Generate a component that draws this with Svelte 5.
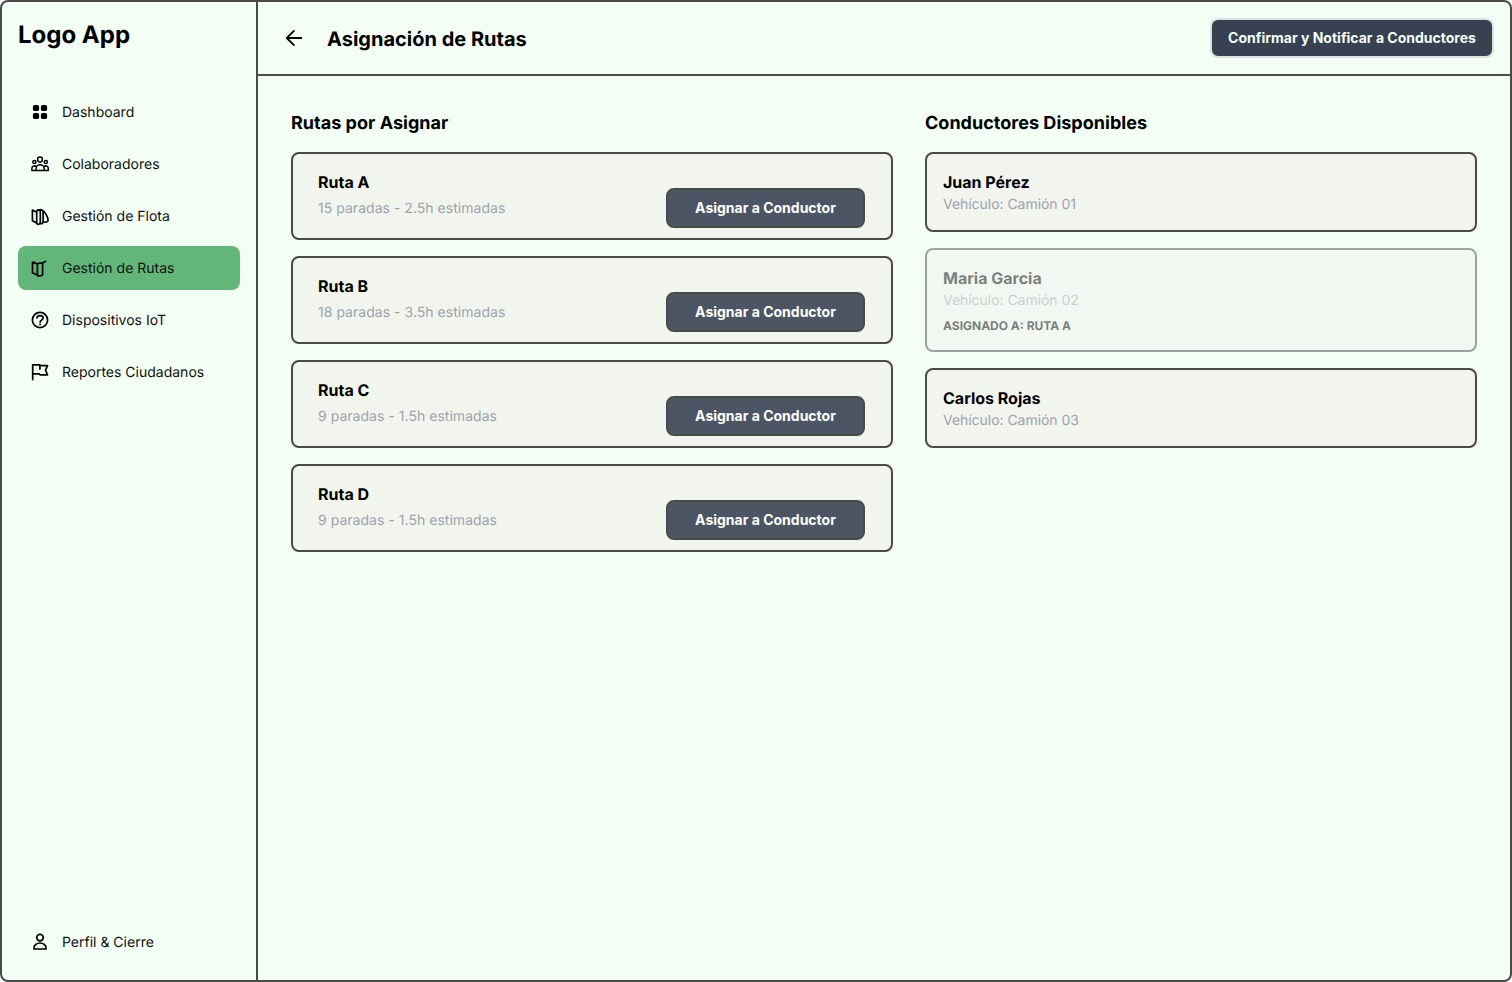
<script>
  const nav = [
    { icon: 'grid', label: 'Dashboard' },
    { icon: 'people', label: 'Colaboradores' },
    { icon: 'fleet', label: 'Gestión de Flota' },
    { icon: 'routes', label: 'Gestión de Rutas', active: true },
    { icon: 'help', label: 'Dispositivos IoT' },
    { icon: 'flag', label: 'Reportes Ciudadanos' }
  ];
  const routes = [
    { name: 'Ruta A', detail: '15 paradas - 2.5h estimadas' },
    { name: 'Ruta B', detail: '18 paradas - 3.5h estimadas' },
    { name: 'Ruta C', detail: '9 paradas - 1.5h estimadas' },
    { name: 'Ruta D', detail: '9 paradas - 1.5h estimadas' }
  ];
  const drivers = [
    { name: 'Juan Pérez', vehicle: 'Camión 01' },
    { name: 'Maria Garcia', vehicle: 'Camión 02', assigned: 'RUTA A' },
    { name: 'Carlos Rojas', vehicle: 'Camión 03' }
  ];
</script>

{#snippet icon(name)}
  <svg class="icon" viewBox="0 0 20 20" aria-hidden="true">
    {#if name === 'grid'}
      <g fill="currentColor" stroke="none">
        <rect x="2.9" y="2.9" width="6.2" height="6.2" rx="1.9" />
        <rect x="10.9" y="2.9" width="6.2" height="6.2" rx="1.9" />
        <rect x="2.9" y="10.9" width="6.2" height="6.2" rx="1.9" />
        <rect x="10.9" y="10.9" width="6.2" height="6.2" rx="1.9" />
      </g>
    {:else if name === 'people'}
      <g stroke-width="1.5">
        <circle cx="10" cy="5.5" r="2.4" />
        <circle cx="4.4" cy="8" r="1.6" />
        <circle cx="15.8" cy="8" r="1.6" />
        <path d="M6 16.4v-1.5a4.1 4.1 0 0 1 8.2 0v1.5M1.9 16.4v-1.7a2.5 2.5 0 0 1 4.1-2.2M18.3 16.4v-1.7a2.5 2.5 0 0 0-4.1-2.2M1.9 16.4h16.4" />
      </g>
    {:else if name === 'fleet'}
      <path d="M2.4 4.1v10.6l4.3 2.2V6.2zM6.7 6.2c0-3 3.6-3 3.6 0v10.4c0 2.2-3.6 2.2-3.6.3M9 4.2c1.6-1 4.1-.6 4.1 1.8v9.8c0 1.6-1.5 2.2-2.8 1.6M12.4 4.3c3 1.8 5.7 6.9 5.7 10.2 0 1.7-3.2 2-5 .9" />
    {:else if name === 'routes'}
      <path d="M2.5 4.4v10.4l4.9 2.4V6zM7.4 6c0-.9 5.2-1.3 5.2-.3v10.8c0 1.3-5.2 2-5.2.7M12.4 5l3.2-1.7M2.5 4.4l2.4 0" />
    {:else if name === 'help'}
      <circle cx="10" cy="10" r="7.6" />
      <path d="M7 8c.1-1.5 1.4-2.3 3-2.3 1.8 0 3.1.9 3.1 2.4 0 2-3 2-3 4" />
      <circle cx="10.1" cy="14.4" r=".95" fill="currentColor" stroke="none" />
    {:else if name === 'flag'}
      <path d="M2.7 17.6V2.8h7.2v4.3M9.9 3.6h7.6l-2 4.6 2 4.7h-7.3l-1-1.1H2.7" />
    {:else if name === 'user'}
      <circle cx="10" cy="5.6" r="3.3" />
      <path d="M4 17v-1.2a6 4.8 0 0 1 12 0V17z" />
    {/if}
  </svg>
{/snippet}

<div class="frame">
  <aside>
    <div class="logo">Logo App</div>
    <nav>
      {#each nav as item}
        <a class:active={item.active} href="#top">{@render icon(item.icon)}<span>{item.label}</span></a>
      {/each}
    </nav>
    <a class="profile" href="#top">{@render icon('user')}<span>Perfil &amp; Cierre</span></a>
  </aside>
  <main>
    <header>
      <svg class="back" viewBox="0 0 20 20" aria-label="Volver">
        <path d="M17.3 10H2.9M9.9 2.9 2.8 10l7.1 7.1" />
      </svg>
      <h1>Asignación de Rutas</h1>
      <button class="confirm">Confirmar y Notificar a Conductores</button>
    </header>
    <div class="content">
      <section class="routes">
        <h2>Rutas por Asignar</h2>
        {#each routes as route}
          <article class="route">
            <div>
              <h3>{route.name}</h3>
              <p>{route.detail}</p>
            </div>
            <button class="assign">Asignar a Conductor</button>
          </article>
        {/each}
      </section>
      <section class="drivers">
        <h2>Conductores Disponibles</h2>
        {#each drivers as driver}
          <article class="driver" class:assigned={driver.assigned}>
            <h3>{driver.name}</h3>
            <p>Vehículo: {driver.vehicle}</p>
            {#if driver.assigned}
              <strong>ASIGNADO A: {driver.assigned}</strong>
            {/if}
          </article>
        {/each}
      </section>
    </div>
  </main>
</div>

<style>
  :global(body) { margin: 0; background: #fff; }
  * { box-sizing: border-box; }
  .frame {
    display: flex;
    width: 1512px;
    height: 982px;
    border: 2px solid #4a4a4a;
    border-radius: 8px;
    background: #f3fef5;
    color: #000;
    font-family: Inter, sans-serif;
    overflow: hidden;
    text-rendering: geometricPrecision;
  }
  aside {
    display: flex;
    flex-direction: column;
    width: 256px;
    padding: 16px;
    border-right: 2px solid #4a4a4a;
  }
  .logo { padding-top: 1px; font-size: 24px; line-height: 32px; font-weight: 700; }
  nav { display: flex; flex-direction: column; gap: 8px; margin-top: 39px; }
  a {
    display: flex;
    align-items: center;
    gap: 12px;
    height: 44px;
    padding: 0 12px;
    border-radius: 8px;
    color: #111;
    font-size: 14px;
    line-height: 20px;
    text-decoration: none;
    width: 222px;
  }
  a span { padding-top: 2px; }
  a.active { background: #63b679; }
  .profile { margin-top: auto; }
  .icon {
    width: 20px;
    height: 20px;
    flex: none;
    fill: none;
    color: #000;
    stroke: currentColor;
    stroke-width: 1.7;
    stroke-linejoin: round;
    stroke-linecap: round;
  }
  main { flex: 1; min-width: 0; }
  header {
    display: flex;
    align-items: center;
    height: 74px;
    padding: 0 16px 0 26px;
    border-bottom: 2px solid #4a4a4a;
  }
  .back { width: 20px; height: 20px; fill: none; stroke: #000; stroke-width: 1.8; stroke-linecap: round; stroke-linejoin: round; }
  h1 { margin: 2px auto 0 23px; font-size: 20px; line-height: 28px; font-weight: 700; }
  button { padding: 0; font-family: inherit; font-size: 14px; line-height: 20px; font-weight: 700; border-radius: 8px; }
  .confirm { width: 284px; height: 40px; border: 2px solid #e0dfe2; background: #374151; color: #f3fef5; }
  .content { display: flex; gap: 32px; padding: 32px 33px; }
  section { display: flex; flex-direction: column; gap: 16px; }
  .routes { width: 602px; }
  .drivers { width: 552px; }
  h2 { margin: 2px 0 -2px; font-size: 18px; line-height: 28px; font-weight: 700; letter-spacing: 0.02px; }
  h3 { margin: 0; font-size: 16px; line-height: 24px; font-weight: 700; }
  p { margin: 1px 0 -1px; color: #9ca3af; font-size: 14px; line-height: 20px; font-weight: 400; }
  article { border: 2px solid #4a4a4a; border-radius: 8px; background: #f2f4ee; }
  .route { display: flex; justify-content: space-between; height: 88px; padding: 16px 26px 0 25px; }
  .route p { margin-top: 5px; letter-spacing: 0.03px; }
  .driver p { letter-spacing: -0.04px; }
  .assign { width: 199px; height: 40px; margin-top: 18px; border: 2px solid #4a4a4a; background: #4b5563; color: #fff; }
  .driver { height: 80px; padding: 16px; }
  .assigned { height: 104px; opacity: .5; }
  strong { display: block; margin-top: 8px; font-size: 12px; line-height: 16px; font-weight: 700; }
</style>
